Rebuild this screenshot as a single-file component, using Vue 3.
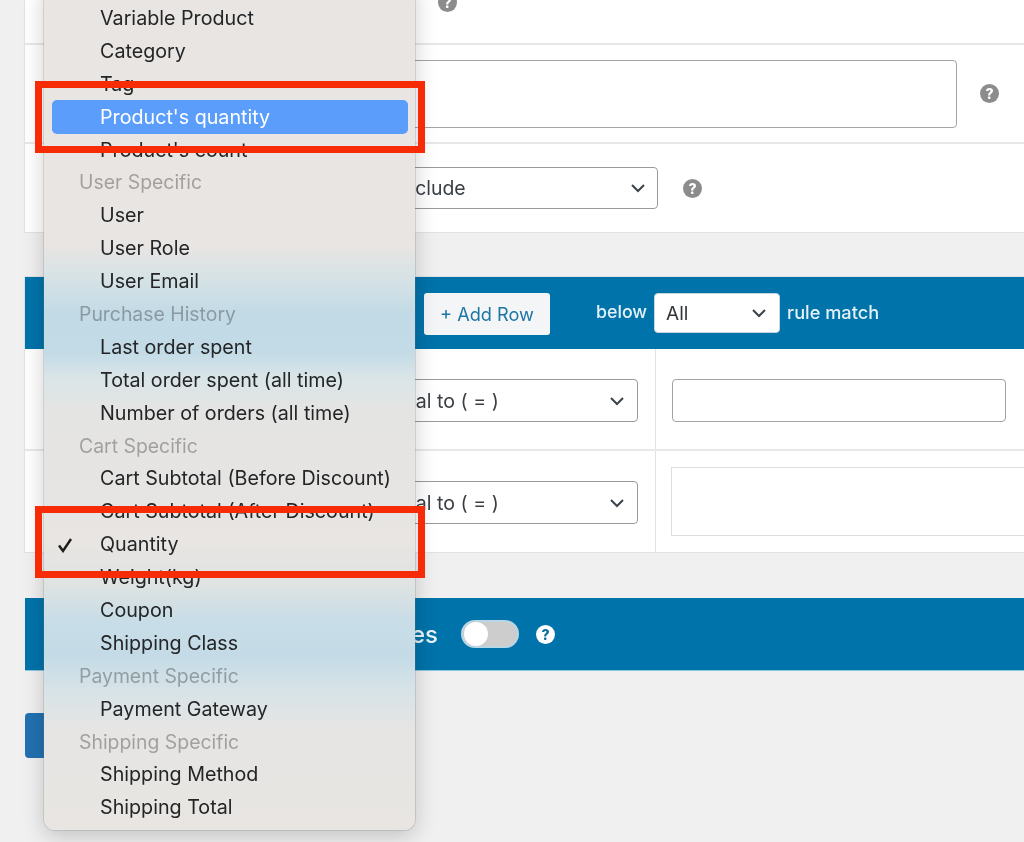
<script setup>
const menu = [
  { t: 'Variable Product' }, { t: 'Category' }, { t: 'Tag' }, { t: "Product's quantity", hi: true }, { t: "Product's count" },
  { t: 'User Specific', g: true }, { t: 'User' }, { t: 'User Role' }, { t: 'User Email' },
  { t: 'Purchase History', g: true }, { t: 'Last order spent' }, { t: 'Total order spent (all time)' }, { t: 'Number of orders (all time)' },
  { t: 'Cart Specific', g: true }, { t: 'Cart Subtotal (Before Discount)' }, { t: 'Cart Subtotal (After Discount)' }, { t: 'Quantity', on: true }, { t: 'Weight(kg)' }, { t: 'Coupon' }, { t: 'Shipping Class' },
  { t: 'Payment Specific', g: true }, { t: 'Payment Gateway' },
  { t: 'Shipping Specific', g: true }, { t: 'Shipping Method' }, { t: 'Shipping Total' }
]
</script>

<template>
  <div class="page">
    <section class="card settings">
      <div class="row row-one">
        <span class="help help-first">?</span>
      </div>
      <div class="row row-two">
        <div class="input wide"></div>
        <span class="help">?</span>
      </div>
      <div class="row row-three">
        <div class="select include">
          <span>Include</span>
          <svg class="chev" viewBox="0 0 16 10"><path d="M2 2l6 6 6-6" /></svg>
        </div>
        <span class="help">?</span>
      </div>
    </section>

    <section class="card rules">
      <header class="bar rules-bar">
        <button class="add">+ Add Row</button>
        <span class="below">below</span>
        <div class="select all">
          <span>All</span>
          <svg class="chev" viewBox="0 0 16 10"><path d="M2 2l6 6 6-6" /></svg>
        </div>
        <span class="match">rule match</span>
      </header>
      <div class="rule">
        <div class="rule-left">
          <div class="select equal">
            <span>Equal to ( = )</span>
            <svg class="chev" viewBox="0 0 16 10"><path d="M2 2l6 6 6-6" /></svg>
          </div>
        </div>
        <div class="rule-right"><div class="input value"></div></div>
      </div>
      <div class="rule second">
        <div class="rule-left">
          <div class="select equal">
            <span>Equal to ( = )</span>
            <svg class="chev" viewBox="0 0 16 10"><path d="M2 2l6 6 6-6" /></svg>
          </div>
        </div>
        <div class="rule-right"><div class="area"></div></div>
      </div>
    </section>

    <section class="bar sale-bar">
      <h2 class="sale-title">Sale Prices</h2>
      <span class="toggle"><i></i></span>
      <span class="help light">?</span>
    </section>

    <button class="save" aria-label="Save"></button>

    <ul class="menu">
      <li v-for="m in menu" :key="m.t" :class="{ group: m.g, hi: m.hi }">
        <svg v-if="m.on" class="check" viewBox="0 0 16 16"><path d="M2 8.5l4 5.5 8-12" /></svg>
        {{ m.t }}
      </li>
    </ul>

    <div class="mark mark-a"></div>
    <div class="mark mark-b"></div>
  </div>
</template>

<style>
html, body { margin: 0; background: #f0f0f1; }
</style>

<style scoped>
.page {
  position: relative;
  height: 842px;
  overflow: hidden;
  padding-left: 25px;
  box-sizing: border-box;
  background: #f0f0f1;
  font-family: Inter, "Liberation Sans", sans-serif;
  color: #2c3338;
  filter: blur(.35px);
}
.card { background: #fff; box-shadow: 0 0 0 1px #e2e2e2; margin-right: -2px; }
.settings { margin-top: -45px; height: 277px; }
.row { display: flex; align-items: center; border-bottom: 2px solid #e8e8e8; box-sizing: border-box; }
.row-one { height: 90px; padding-left: 413px; }
.help-first { margin-top: 7px; }
.row-two { height: 99px; padding-left: 300px; gap: 23px; }
.row-three { height: 88px; border-bottom: 0; padding-left: 300px; gap: 25px; }
.input { box-sizing: border-box; border: 1.5px solid #a3a3a3; border-radius: 4px; background: #fff; }
.wide { width: 632px; height: 68px; }
.select {
  box-sizing: border-box;
  display: flex;
  align-items: center;
  justify-content: space-between;
  border: 1.5px solid #9a9a9a;
  border-radius: 4px;
  background: #fff;
  font-size: 19px;
  color: #3a3f44;
}
.chev { width: 16px; height: 10px; fill: none; stroke: #3c434a; stroke-width: 2; }
.include { width: 333px; height: 42px; padding: 0 11px 0 72.5px; margin-top: -1px; font-size: 19.4px; }
.help {
  flex: none;
  width: 19px;
  height: 19px;
  border-radius: 50%;
  background: #8c8c8c;
  color: #fff;
  font-size: 14px;
  font-weight: 800;
  line-height: 19px;
  text-align: center;
}
.rules { margin-top: 45px; height: 275px; }
.bar { background: #0073aa; box-sizing: border-box; }
.rules-bar { height: 72px; display: flex; align-items: center; padding-left: 399px; }
.add {
  width: 126px;
  height: 42px;
  margin-top: 1px;
  border: 0;
  border-radius: 3px;
  background: #f3f5f6;
  color: #1d75a6;
  font: 18.2px Inter, "Liberation Sans", sans-serif;
  padding: 0;
}
.below { margin-left: 46px; color: #e4f2f8; font-size: 17.8px; font-weight: 500; margin-top: -3px; }
.all { width: 126px; height: 40px; margin-left: 7px; padding: 0 12px 0 11px; border: 1px solid #c8d6de; color: #30363a; }
.match { margin-left: 7px; color: #e4f2f8; font-size: 18.2px; font-weight: 500; margin-top: -3px; }
.rule { display: flex; height: 102px; border-bottom: 2px solid #e8e8e8; box-sizing: border-box; }
.rule.second { height: 101px; border-bottom: 0; }
.rule-left { width: 631px; flex: none; box-sizing: border-box; padding: 30px 0 0 275px; border-right: 1px solid #e2e2e2; }
.equal { width: 338px; height: 43px; padding: 0 12px 0 79.5px; font-size: 19.6px; }
.rule-right { flex: 1; padding: 30px 0 0 16px; }
.value { width: 334px; height: 43px; }
.second .rule-right { padding: 16px 0 0 15px; }
.area { height: 69px; box-sizing: border-box; border: 1px solid #dedede; background: #fff; }
.sale-bar {
  margin: 46px -2px 0 0;
  height: 72px;
  display: flex;
  align-items: center;
  box-shadow: 0 1px 0 #8cc7e0;
}
.sale-title {
  width: 413px;
  margin: 1px 0 0;
  text-align: right;
  font-size: 24px;
  font-weight: 500;
  color: #e8f5fa;
}
.toggle {
  margin-left: 23px;
  width: 58px;
  height: 28px;
  box-sizing: border-box;
  border-radius: 14px;
  background: #cdcdcd;
  border: 2px solid #b9d6e4;
  display: flex;
  align-items: center;
  padding-left: 1px;
  margin-top: -1px;
}
.toggle i { width: 24px; height: 24px; border-radius: 50%; background: #fff; }
.light { margin: 0 0 0 17px; background: #fff; color: #0b6fa3; }
.save {
  display: block;
  width: 160px;
  height: 45px;
  margin-top: 43px;
  border: 0;
  border-radius: 4px;
  background: #2271b1;
}
.menu {
  position: absolute;
  left: 44px;
  top: -16px;
  width: 371px;
  height: 846px;
  margin: 0;
  padding: 18px 0 0;
  box-sizing: border-box;
  list-style: none;
  border-radius: 0 0 11px 11px;
  box-shadow: 0 0 0 1px rgba(120, 120, 120, .22), 0 6px 22px rgba(0, 0, 0, .2);
  background: linear-gradient(180deg,
    #e8e5e2 0, #e8e5e2 262px, #d5e2e6 296px, #c2dae6 330px, #c3dbe7 368px,
    #dbe5e7 396px, #e4e4e3 425px, #e8e5e2 560px, #dfe3e2 600px, #c8dde7 636px,
    #c4dbe7 672px, #d7e3e7 706px, #e6e5e3 745px, #e8e5e2 100%);
}
.menu li {
  position: relative;
  height: 32.9px;
  line-height: 32.9px;
  margin: 0 7px 0 8px;
  padding-left: 48px;
  font-size: 19.7px;
  color: #232527;
  border-radius: 5px;
  white-space: nowrap;
}
.menu li.group { padding-left: 27px; font-size: 19.4px; color: rgba(40, 40, 40, .36); }
.menu li.hi { background: #5a9dfa; color: #fff; box-shadow: 0 -1px 0 #5a9dfa; }
.check {
  position: absolute;
  left: 5px;
  top: 9px;
  width: 16px;
  height: 16px;
  fill: none;
  stroke: #1c1c1c;
  stroke-width: 2.4;
}
.mark {
  position: absolute;
  left: 35px;
  width: 390px;
  height: 72px;
  box-sizing: border-box;
  border: 7px solid #f72c07;
}
.mark-a { top: 81px; }
.mark-b { top: 506px; }
</style>
